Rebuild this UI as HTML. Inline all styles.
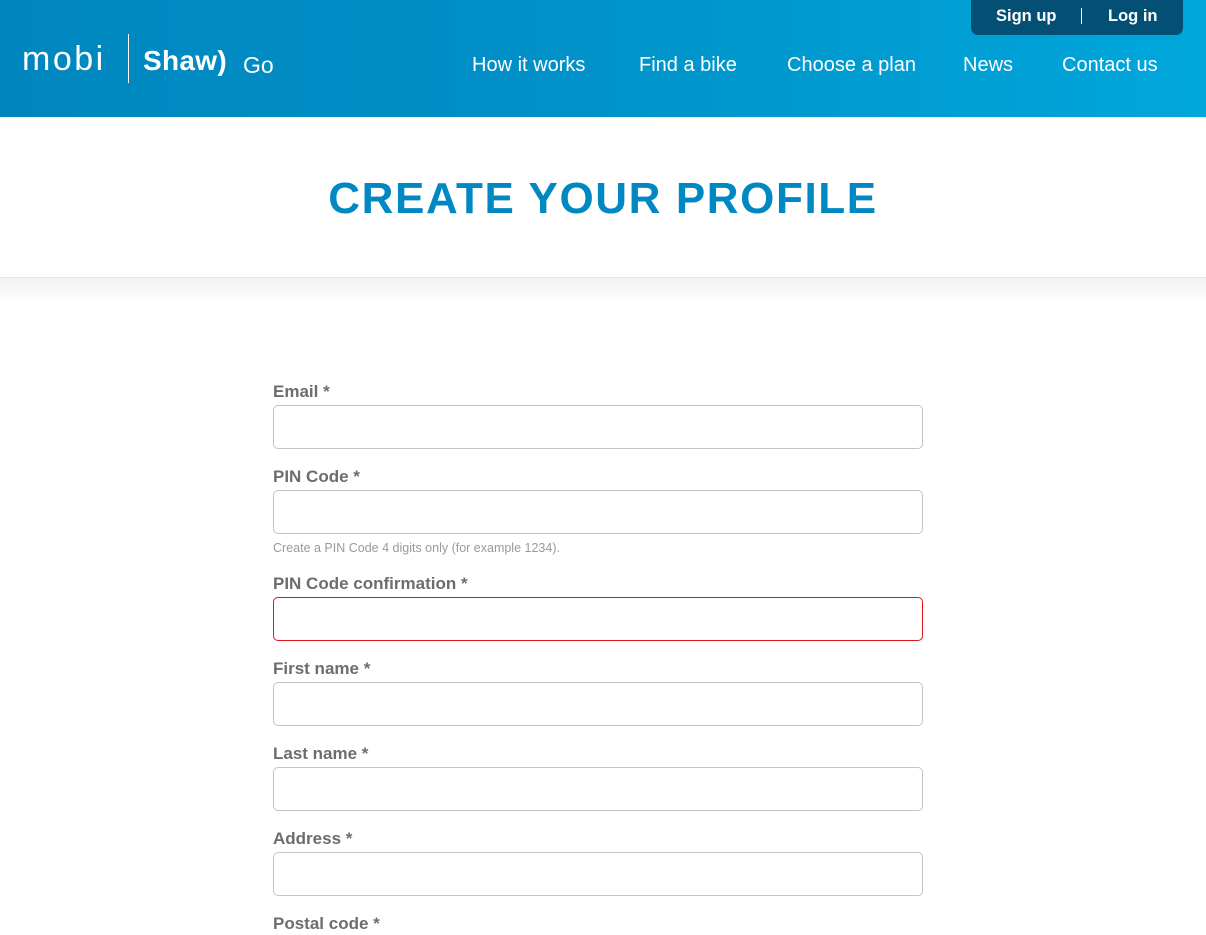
<!DOCTYPE html>
<html><head><style>
*{margin:0;padding:0;box-sizing:border-box}
body{width:1206px;height:935px;overflow:hidden;background:#fff;font-family:"Liberation Sans",sans-serif;position:relative}
.hdr{position:absolute;left:0;top:0;width:1206px;height:117px;background:linear-gradient(90deg,#0086bf 0%,#008fc6 40%,#00a7db 100%)}
.top{position:absolute;left:971px;top:0;width:212px;height:35px;background:#044f74;border-radius:0 0 7px 7px;color:#fff;font-weight:bold;font-size:16.5px}
.top span{position:absolute;top:7px}
.top i{position:absolute;left:110px;top:8px;width:1px;height:16px;background:#fff}
.nav{position:absolute;top:54px;color:#fff;font-size:20px}
.logo{position:absolute;color:#fff}
.title{position:absolute;top:174px;left:0;width:1206px;text-align:center;color:#0088c2;font-size:44px;font-weight:bold;letter-spacing:1.6px}
.shadow{position:absolute;top:277px;left:0;width:1206px;height:26px;border-top:1px solid #e6e6e6;background:linear-gradient(#f2f2f2,#fff)}
label{position:absolute;left:273px;color:#6d6d6d;font-weight:bold;font-size:17px}
.in{position:absolute;left:273px;width:650px;height:44px;border:1px solid #c4c4c4;border-radius:5px}
.help{position:absolute;left:273px;top:541px;font-size:12.5px;color:#9a9a9a}
</style></head><body>
<div class="hdr">
 <div class="logo" style="left:22px;top:40px;font-size:34px;letter-spacing:2.5px">mobi</div>
 <div style="position:absolute;left:128px;top:34px;width:1px;height:49px;background:#fff"></div>
 <div class="logo" style="left:143px;top:45px;font-size:28px;font-weight:bold;letter-spacing:0.3px">Shaw)</div>
 <div class="logo" style="left:243px;top:52px;font-size:23px">Go</div>
 <div class="top"><span style="left:25px">Sign up</span><i></i><span style="left:137px">Log in</span></div>
 <div class="nav" style="left:472px">How it works</div>
 <div class="nav" style="left:639px">Find a bike</div>
 <div class="nav" style="left:787px">Choose a plan</div>
 <div class="nav" style="left:963px">News</div>
 <div class="nav" style="left:1062px">Contact us</div>
</div>
<div class="title">CREATE YOUR PROFILE</div>
<div class="shadow"></div>
<label style="top:382px">Email *</label><div class="in" style="top:405px"></div>
<label style="top:467px">PIN Code *</label><div class="in" style="top:490px"></div>
<div class="help">Create a PIN Code 4 digits only (for example 1234).</div>
<label style="top:574px">PIN Code confirmation *</label><div class="in" style="top:597px;border-color:#e0161d"></div>
<label style="top:659px">First name *</label><div class="in" style="top:682px"></div>
<label style="top:744px">Last name *</label><div class="in" style="top:767px"></div>
<label style="top:829px">Address *</label><div class="in" style="top:852px"></div>
<label style="top:914px">Postal code *</label>
</body></html>
